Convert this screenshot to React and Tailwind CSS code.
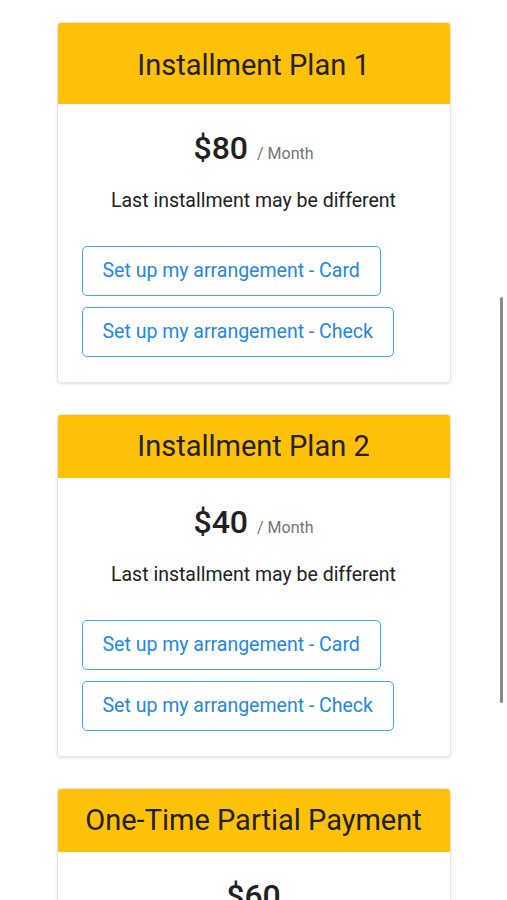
export default function App() {
  const plans = [
    { title: "Installment Plan 1", price: "$80", first: true },
    { title: "Installment Plan 2", price: "$40" },
  ];
  return (
    <div className="relative h-[900px] w-[507px] overflow-hidden bg-white" style={{ fontFamily: "Roboto, 'Liberation Sans', sans-serif" }}>
      <div className="flex flex-col items-center gap-[31px] pt-[22px]">
        {plans.map((p) => (
          <div key={p.title} className="w-[394px] overflow-hidden rounded-[4px] border border-[#e6e6e6] bg-white shadow-[0_1px_3px_rgba(0,0,0,0.12)]">
            <div className={`flex items-center justify-center bg-[#ffc107] text-[29px] text-[#212121] ${p.first ? "h-[81px] pt-[4px]" : "h-[63px]"}`}>
              {p.title}
            </div>
            <div className="flex h-[278px] flex-col items-center px-[24px] pt-[24px]">
              <div className="flex h-[40px] items-baseline leading-[40px]">
                <span className="text-[32px] font-medium leading-[40px] text-[#212121]">{p.price}</span>
                <span className="ml-[9px] text-[16px] leading-[40px] text-[#757575]">/ Month</span>
              </div>
              <div className="mt-[19px] text-[19.5px] leading-[28px] text-[#212121]">Last installment may be different</div>
              <div className="mt-[31px] flex w-full flex-col items-start gap-[11px]">
                <button className="h-[50px] rounded-[5px] border-[1.5px] border-[#42a5f5] px-[20px] text-[19.5px] text-[#1e88e5]">
                  Set up my arrangement - Card
                </button>
                <button className="h-[50px] rounded-[5px] border-[1.5px] border-[#42a5f5] px-[20px] text-[19.5px] text-[#1e88e5]">
                  Set up my arrangement - Check
                </button>
              </div>
            </div>
          </div>
        ))}
        <div className="w-[394px] overflow-hidden rounded-[4px] border border-[#e6e6e6] bg-white shadow-[0_1px_3px_rgba(0,0,0,0.12)]">
          <div className="flex h-[63px] items-center justify-center bg-[#ffc107] text-[29px] text-[#212121]">
            One-Time Partial Payment
          </div>
          <div className="flex flex-col items-center px-[24px] pt-[24px] pb-[25px]">
            <div className="flex h-[40px] items-baseline leading-[40px]">
              <span className="text-[32px] font-medium leading-[40px] text-[#212121]">$60</span>
            </div>
          </div>
        </div>
      </div>
      <div className="absolute left-[500px] top-[297px] h-[406px] w-[3px] rounded-full bg-[#8a8a8a]" />
    </div>
  );
}
